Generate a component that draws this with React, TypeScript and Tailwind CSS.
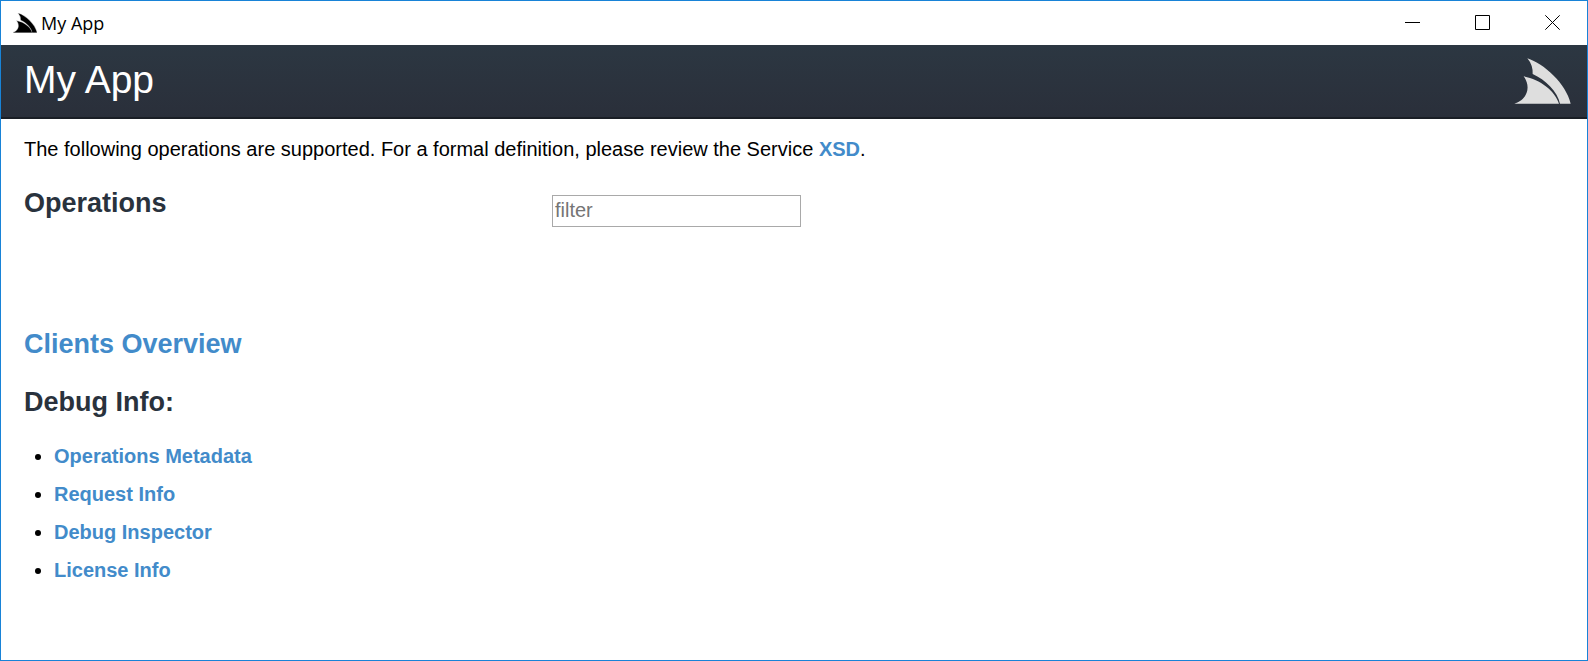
import { useState } from "react";

function FinLogo({ className }: { className: string }) {
  return (
    <svg viewBox="42 39 171 138" className={className} fill="currentColor" aria-hidden="true">
      <path d="M82 40C132 56 198 116 212 176L180 176C173 140 136 104 98 87Q99 60 82 40Z" />
      <path d="M71 94C120 103 165 137 177 176L43 176C74 168 98 132 71 94Z" />
    </svg>
  );
}

function WindowButton({ label, d }: { label: string; d: string }) {
  return (
    <button type="button" aria-label={label} className="flex h-[43px] w-[69px] items-center justify-center">
      <svg viewBox="0 0 15 15" className="size-[15px]" fill="none" stroke="black" aria-hidden="true">
        <path d={d} />
      </svg>
    </button>
  );
}

const debugLinks = ["Operations Metadata", "Request Info", "Debug Inspector", "License Info"];
const linkClass = "font-bold text-[#428bca] hover:underline";

export default function App() {
  const [filter, setFilter] = useState("");

  return (
    <div className="flex min-h-screen flex-col border border-[#1883d7] bg-white font-['Liberation_Sans',Arial,sans-serif] text-xl leading-6 text-black">
      <div className="flex h-11 items-start justify-between">
        <div className="flex h-11 items-center gap-1 pl-3 font-['Open_Sans',sans-serif] text-lg leading-6">
          <FinLogo className="h-5 w-6 stroke-black/25 stroke-[8px] text-black" />
          <span>My App</span>
        </div>
        <div className="flex gap-px">
          <WindowButton label="Minimize" d="M0 7.5H15" />
          <WindowButton label="Maximize" d="M.5.5H14.5V14.5H.5Z" />
          <WindowButton label="Close" d="M.3.3L14.7 14.7M14.7.3L.3 14.7" />
        </div>
      </div>
      <header className="flex h-[74px] items-center justify-between border-b-2 border-[#1a1e25] bg-linear-to-b from-[#2c3742] to-[#2a2f3a] pr-4 pl-[23px]">
        <h1 className="pb-0.5 text-[39px] leading-[48px] text-white">My App</h1>
        <FinLogo className="h-[46px] w-[57px] text-[#dedede]" />
      </header>
      <main className="px-[23px] pt-[18px]">
        <p>
          The following operations are supported. For a formal definition, please review the Service{" "}
          <a href="#xsd" className={linkClass}>XSD</a>.
        </p>
        <div className="mt-[26px] flex items-start">
          <h2 className="w-[528px] text-[27px] leading-8 font-bold text-[#29323d]">Operations</h2>
          <input
            type="text"
            aria-label="Filter operations"
            placeholder="filter"
            value={filter}
            onChange={(event) => setFilter(event.target.value)}
            className="mt-2 h-8 w-[249px] border border-[#a9a9a9] px-0.5 pb-0.5 placeholder:text-[#757575]"
          />
        </div>
        <h2 className="mt-[101px] text-[27px] leading-8 font-bold">
          <a href="#clients" className={linkClass}>Clients Overview</a>
        </h2>
        <h2 className="mt-[26px] text-[27px] leading-8 font-bold text-[#29323d]">Debug Info:</h2>
        <ul className="mt-[26px] flex list-disc flex-col gap-3.5 pl-[30px]">
          {debugLinks.map((name) => (
            <li key={name}>
              <a href="#debug" className={linkClass}>{name}</a>
            </li>
          ))}
        </ul>
      </main>
    </div>
  );
}
